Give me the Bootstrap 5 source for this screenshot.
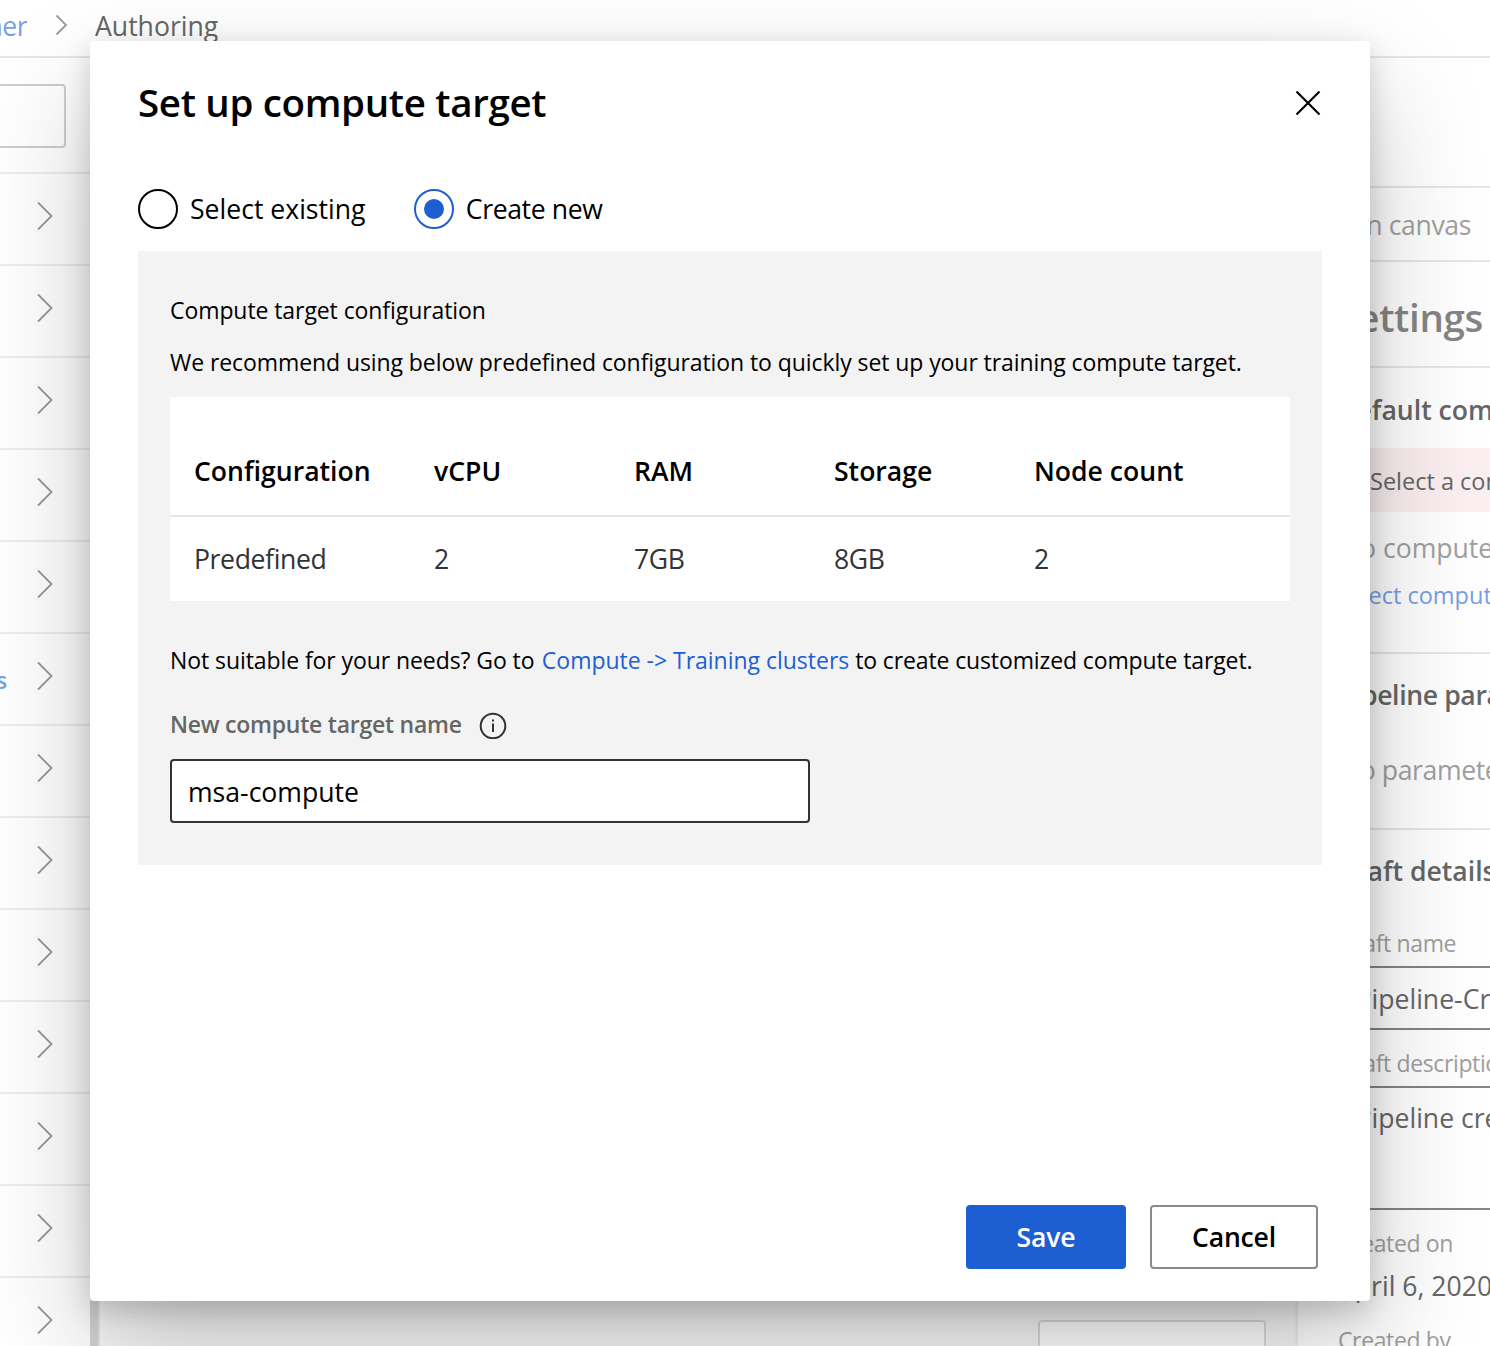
<!DOCTYPE html>
<html lang="en">
<head>
<meta charset="utf-8">
<title>Set up compute target</title>
<link href="https://cdn.jsdelivr.net/npm/bootstrap@5.3.0/dist/css/bootstrap.min.css" rel="stylesheet">
<style>
html, body { height: 1346px; overflow: hidden; }
body { font-family: "Open Sans", "Noto Sans", sans-serif; font-size: 26.6px; line-height: 36px; color: #000; background: #fff; white-space: nowrap; }
.t-12 { font-size: 23px; letter-spacing: -.08px; }
.t-12w { font-size: 23.5px; }
.t-title { font-size: 38.5px; line-height: 52px; letter-spacing: -.33px; }
.semi { font-weight: 600; }
.snug { letter-spacing: -.38px; }
.ink { color: #666; }
.faint { color: #a0a0a0; }
.azure { color: #1d5fd3; text-decoration: none; letter-spacing: -.02px; margin-left: 1.5px; }
.azure-dim { color: #779fe5; }
.page { width: 1490px; height: 1346px; }
.topbar { height: 58px; border-bottom: 2px solid #e6e6e6; padding-bottom: 4px; }
.crumb-prev { width: 27px; direction: rtl; overflow: hidden; letter-spacing: -.5px; }
.crumb-arrow { margin-bottom: 2px; }
.crumb-here { margin-left: 24px; }
.side { width: 90px; }
.side-search { height: 116px; border-bottom: 2px solid #ededed; padding-top: 26px; }
.side-box { width: 66px; height: 64px; border: 2px solid #cdcdcd; border-left: 0; border-radius: 0 4px 4px 0; }
.side-row { height: 92px; border-bottom: 2px solid #ededed; flex: none; padding: 0 37px 6px 0; }
.side-link { direction: rtl; width: 7px; padding-top: 8px; }
.chev { fill: none; stroke: #999; stroke-width: 1.8; }
.splitter { width: 10px; background: #d3d3d3; border-right: 2px solid #e4e4e4; }
.stage { background: #f8f8f8; }
.stage-box { width: 228px; height: 60px; margin: 0 32px -34px 0; border: 2px solid #dadada; border-radius: 4px; background: #fff; }
.props { width: 192px; background: #fff; box-shadow: 0 0 6px rgba(0,0,0,.12); overflow: hidden; }
.props .rule { border-bottom: 2px solid #e6e6e6; }
.pad { padding-left: 40px; }
.pad-wide { padding-left: 42px; }
.pad-slim { padding-left: 38.5px; }
.tools { height: 130px; }
.find { height: 74px; padding: 2px 19px 0 0; }
.props-title { height: 106px; padding: 5px 0 0 38.5px; color: #858585; }
.props-sub { height: 80px; padding: 3px 0 0 39px; }
.alert-strip { height: 64px; background: #fbeff1; padding: 2px 0 0 72px; }
.field { border: 2px solid #858585; margin-left: 40px; padding-left: 15.5px; width: 400px; }
.field-name { height: 64px; padding-top: 2px; }
.field-desc { height: 124px; padding-top: 12px; }
.dialog { position: absolute; left: 90px; top: 41px; width: 1280px; height: 1260px; background: #fff; border-radius: 4px; padding: 36px 48px 32px; box-shadow: 0 51px 115px rgba(0,0,0,.22), 0 9.6px 28.8px rgba(0,0,0,.18); }
.dialog-title { margin: -1px 0 1px; }
.choices { height: 40px; margin-top: 60px; gap: 48.3px; }
.ring { width: 40px; height: 40px; border: 2px solid #000; border-radius: 50%; margin-right: 12px; }
.ring.on { border-color: #1d5fd3; }
.ring.on::after { content: ""; width: 20px; height: 20px; border-radius: 50%; background: #1d5fd3; }
.config { margin-top: 22px; height: 614px; background: #f3f3f3; padding: 41px 32px; }
.spec { margin-top: 17px; background: #fff; height: 204px; }
.spec-head { height: 120px; border-bottom: 2px solid #e6e6e6; padding: 56px 24px 0; }
.spec-line { height: 84px; padding: 0 24px; color: #333; }
.c-first { width: 240px; }
.c-next { width: 200px; }
.hint { margin-top: 41px; }
.hint-tail { letter-spacing: -.12px; }
.name-label { margin-top: 28px; color: #666; letter-spacing: -.24px; }
.info { margin-left: 16px; }
.name-input { width: 640px; height: 64px; margin-top: 17px; border: 2px solid #333; border-radius: 4px; padding: 2px 16px 0; color: #000; background: #fff; }
.btn-fluent { height: 64px; border-radius: 4px; font-size: 26.6px; font-weight: 600; line-height: 36px; padding: 0; border-width: 2px; letter-spacing: -.2px; }
.btn-save { width: 160px; background: #1d5fd3; color: #fff; }
.btn-cancel { width: 168px; border-color: #8a8a8a; color: #000; background: #fff; margin-right: 4px; }
</style>
<script src="https://cdn.jsdelivr.net/npm/bootstrap@5.3.0/dist/js/bootstrap.bundle.min.js"></script>
</head>
<body>
<div class="page d-flex flex-column overflow-hidden">
  <header class="topbar d-flex align-items-center flex-shrink-0">
    <span class="crumb-prev azure-dim">Designer</span>
    <svg class="chev crumb-arrow ms-4" width="20" height="24"><path d="M5.500 2.500 15 12 5.500 21.500"/></svg>
    <span class="crumb-here ink">Authoring</span>
  </header>
  <div class="d-flex flex-grow-1 overflow-hidden">
    <aside class="side d-flex flex-column flex-shrink-0" id="side">
      <div class="side-search flex-shrink-0"><div class="side-box"></div></div>
    </aside>
    <div class="splitter flex-shrink-0"></div>
    <main class="stage flex-grow-1 d-flex justify-content-end align-items-end"><div class="stage-box"></div></main>
    <aside class="props flex-shrink-0">
      <div class="tools rule"></div>
      <div class="find rule d-flex align-items-center justify-content-end faint snug">Search in canvas</div>
      <div class="props-title rule t-title semi d-flex align-items-center">Settings</div>
      <div class="props-sub semi ink d-flex align-items-center">Default compute target</div>
      <div class="alert-strip d-flex align-items-center t-12w ink">Select a compute target</div>
      <div class="pad-wide faint" style="padding-top:18px">No compute target selected</div>
      <div class="pad-slim t-12w azure-dim rule" style="padding-top:11px;height:88px">Select compute target</div>
      <div class="pad semi ink snug" style="padding-top:23px">Pipeline parameters</div>
      <div class="pad-wide faint snug rule" style="padding-top:39px;height:117px">No parameters</div>
      <div class="pad-slim semi ink" style="padding-top:23px">Draft details</div>
      <div class="pad t-12 snug faint" style="padding-top:36px;height:77px">Draft name</div>
      <div class="field field-name ink d-flex align-items-center">Pipeline-Created-on-04-06</div>
      <div class="pad t-12 snug faint" style="padding-top:15px;height:56px">Draft description</div>
      <div class="field field-desc ink">Pipeline created on</div>
      <div class="pad t-12 snug faint" style="padding-top:15px">Created on</div>
      <div class="pad ink" style="padding-top:7px">April 6, 2020</div>
      <div class="pad t-12 snug faint" style="padding-top:18px">Created by</div>
    </aside>
  </div>
</div>

<section class="dialog d-flex flex-column">
  <div class="d-flex justify-content-between align-items-center">
    <h1 class="dialog-title t-title semi">Set up compute target</h1>
    <svg width="28" height="28" fill="none" stroke="#000" stroke-width="2.200"><path d="M2.500 2.500 25.500 25.500M25.500 2.500 2.500 25.500"/></svg>
  </div>
  <div class="choices d-flex align-items-center">
    <label class="d-flex align-items-center"><span class="ring"></span><span>Select existing</span></label>
    <label class="d-flex align-items-center"><span class="ring on d-flex align-items-center justify-content-center"></span><span class="snug">Create new</span></label>
  </div>
  <div class="config">
    <div class="t-12">Compute target configuration</div>
    <div class="t-12 mt-3">We recommend using below predefined configuration to quickly set up your training compute target.</div>
    <div class="spec">
      <div class="spec-head d-flex semi"><div class="c-first">Configuration</div><div class="c-next">vCPU</div><div class="c-next">RAM</div><div class="c-next">Storage</div><div>Node count</div></div>
      <div class="spec-line snug d-flex align-items-center"><div class="c-first">Predefined</div><div class="c-next">2</div><div class="c-next">7GB</div><div class="c-next">8GB</div><div>2</div></div>
    </div>
    <div class="t-12 hint">Not suitable for your needs? Go to <a class="azure" href="#">Compute -&gt; Training clusters</a> <span class="hint-tail">to create customized compute target.</span></div>
    <div class="t-12 name-label semi d-flex align-items-center">New compute target name
      <svg class="info" width="30" height="30" fill="none" stroke="#333" stroke-width="2"><circle cx="15" cy="17" r="12.300"/><path d="M15 14.500V23M15 10.500V12.500"/></svg></div>
    <input class="name-input d-block" value="msa-compute">
  </div>
  <div class="d-flex justify-content-end mt-auto gap-4">
    <button class="btn btn-fluent btn-save">Save</button>
    <button class="btn btn-fluent btn-cancel">Cancel</button>
  </div>
</section>
<script>
// Module category list: thirteen collapsed rows, one with a link in its label.
const side = document.getElementById('side');
for (let i = 0; i < 13; i++) {
  side.insertAdjacentHTML('beforeend', `<div class="side-row d-flex align-items-center justify-content-between"><span class="side-link t-12 semi azure-dim">${i === 5 ? 'Models' : ''}</span><svg class="chev" width="16" height="30"><path d="M1 1.500 14.500 15 1 28.500"/></svg></div>`);
}
</script>
</body>
</html>
